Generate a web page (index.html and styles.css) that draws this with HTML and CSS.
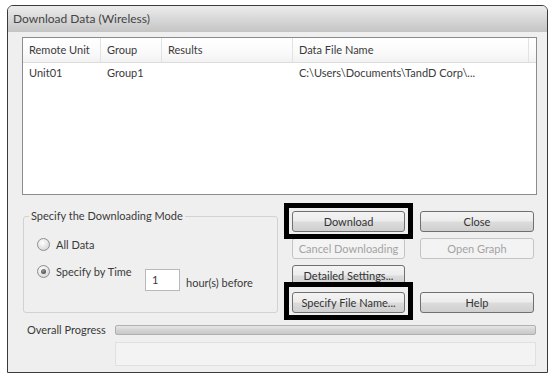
FILE: index.html
```html
<!DOCTYPE html>
<html lang="en">
<head>
    <meta charset="UTF-8">
    <meta name="viewport" content="width=device-width, initial-scale=1.0">
    <title>Download Data (Wireless)</title>
    <link rel="stylesheet" href="styles.css">
</head>
<body>
    <div class="window">
        <div class="titlebar">Download Data (Wireless)</div>
        <div class="client">
            <div class="listview">
                <div class="lv-row lv-head">
                    <div class="cell c1">Remote Unit</div>
                    <div class="cell c2">Group</div>
                    <div class="cell c3">Results</div>
                    <div class="cell c4">Data File Name</div>
                    <div class="cell c5"></div>
                </div>
                <div class="lv-row">
                    <div class="cell c1">Unit01</div>
                    <div class="cell c2">Group1</div>
                    <div class="cell c3"></div>
                    <div class="cell c4">C:\Users\Documents\TandD Corp\...</div>
                </div>
            </div>

            <div class="lower">
                <fieldset class="modebox">
                    <legend>Specify the Downloading Mode</legend>
                    <div class="radio-row">
                        <span class="radio"></span>
                        <span>All Data</span>
                    </div>
                    <div class="radio-row time-row">
                        <div class="time-label">
                            <span class="radio checked"></span>
                            <span>Specify by Time</span>
                        </div>
                        <div class="textbox">1</div>
                        <span class="hours">hour(s) before</span>
                    </div>
                </fieldset>

                <div class="buttons">
                    <button class="btn marked">Download</button>
                    <button class="btn">Close</button>
                    <button class="btn" disabled>Cancel Downloading</button>
                    <button class="btn" disabled>Open Graph</button>
                    <button class="btn">Detailed Settings...</button>
                    <span></span>
                    <button class="btn marked marked-low">Specify File Name...</button>
                    <button class="btn">Help</button>
                </div>
            </div>

            <div class="progress-row">
                <span class="progress-label">Overall Progress</span>
                <div class="progress-bar"></div>
            </div>
            <div class="status-box"></div>
        </div>
    </div>
</body>
</html>
```

FILE: styles.css
```css
body {
    margin: 0;
    background: #fff;
    font-family: Lato, 'Open Sans', sans-serif;
    font-size: 11px;
    color: #3a3a3a;
}
.window {
    margin: 5px 0 0 7px;
    width: 539px;
    border: 1px solid #3a3a3a;
    border-radius: 6px 6px 0 0;
    background: #efefef;
    overflow: hidden;
}
.titlebar {
    height: 26px;
    line-height: 26px;
    padding-left: 5px;
    font-size: 12px;
    color: #444;
    background: linear-gradient(#ececec, #d6d6d6 55%, #c4c4c4);
}
.client {
    padding: 5px 10px 6px 14px;
}
.listview {
    height: 156px;
    border: 1px solid #8c8c8c;
    background: #fff;
}
.lv-row {
    display: flex;
    height: 20px;
    line-height: 20px;
}
.lv-head {
    height: 24px;
    line-height: 24px;
    border-bottom: 1px solid #dcdcdc;
    background: linear-gradient(#fff, #fafafa 60%, #f2f2f2);
}
.cell {
    padding-left: 6px;
    white-space: nowrap;
    box-sizing: border-box;
}
.lv-head .cell {
    border-right: 1px solid #e2e2e2;
}
.c1 { width: 78px; }
.c2 { width: 61px; }
.c3 { width: 131px; }
.c4 { width: 236px; }
.c5 { flex: 1; }
.lv-head .c5 { border-right: none; }

.lower {
    display: flex;
    margin-top: 13px;
    padding-left: 1px;
}
.modebox {
    width: 255px;
    box-sizing: border-box;
    margin: 0;
    padding: 0 8px 16px 13px;
    border: 1px solid #d2d2d2;
    border-radius: 3px;
}
.modebox legend {
    line-height: 16px;
    padding: 0 2px;
    margin-left: -8px;
}
.radio-row {
    display: flex;
    align-items: center;
    height: 16px;
    margin-top: 12px;
}
.radio {
    width: 11px;
    height: 11px;
    margin-right: 6px;
    border: 1px solid #8e8e8e;
    border-radius: 50%;
    background: radial-gradient(circle at 40% 35%, #fff, #dcdcdc 70%, #c8c8c8);
    position: relative;
}
.radio.checked::after {
    content: '';
    position: absolute;
    left: 3px;
    top: 3px;
    width: 5px;
    height: 5px;
    border-radius: 50%;
    background: radial-gradient(circle at 40% 35%, #9a9a9a, #333);
}
.time-row {
    align-items: flex-start;
    height: auto;
    margin-top: 11px;
}
.time-label {
    display: flex;
    align-items: center;
    width: 108px;
    height: 16px;
}
.textbox {
    width: 35px;
    height: 22px;
    box-sizing: border-box;
    margin-top: 6px;
    padding-left: 6px;
    line-height: 20px;
    border: 1px solid #b9b9b9;
    background: #fff;
}
.hours {
    margin: 12px 0 0 6px;
    line-height: 16px;
}

.buttons {
    display: grid;
    grid-template-columns: 113px 114px;
    grid-auto-rows: 21px;
    column-gap: 15px;
    row-gap: 6px;
    margin-left: 14px;
    padding-top: 3px;
}
.btn {
    font: inherit;
    color: #333;
    padding: 0;
    border: 1px solid #707070;
    border-radius: 3px;
    background: linear-gradient(#f4f4f4, #ececec 48%, #dcdcdc 52%, #cfcfcf);
}
.btn:disabled {
    color: #a3a3a3;
    border-color: #c4c4c4;
    background: #f3f3f3;
}
.btn.marked {
    position: relative;
}
.btn.marked::after {
    content: '';
    position: absolute;
    top: -9px;
    right: -9px;
    bottom: -8px;
    left: -9px;
    border: 5px solid #000;
}
.btn.marked-low::after {
    top: -11px;
}

.progress-row {
    display: flex;
    align-items: center;
    margin-top: 10px;
}
.progress-label {
    width: 93px;
    padding-left: 5px;
    box-sizing: border-box;
}
.progress-bar {
    flex: 1;
    height: 10px;
    margin-right: 1px;
    border: 1px solid #b0b0b0;
    border-radius: 2px;
    box-sizing: border-box;
    background: linear-gradient(#e6e6e6, #d4d4d4 50%, #c8c8c8);
}
.status-box {
    height: 24px;
    margin: 6px 1px 0 93px;
    border: 1px solid #e0e0e0;
    box-sizing: border-box;
    background: #f3f3f3;
}
```
